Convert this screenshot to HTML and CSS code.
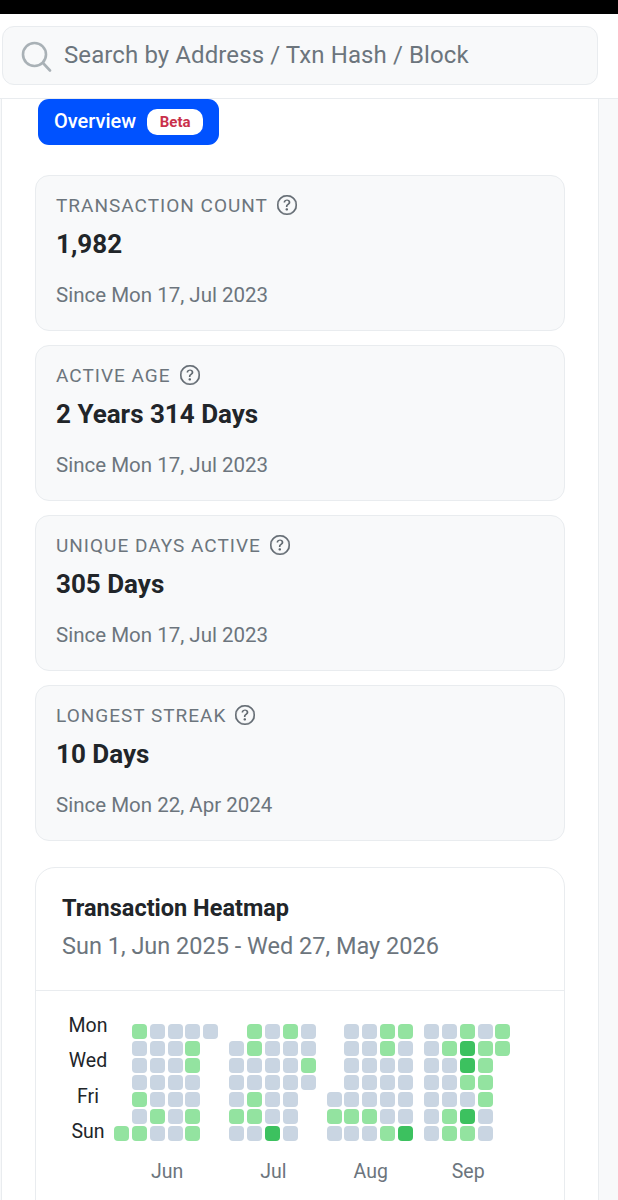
FILE: index.html
```html
<!DOCTYPE html>
<html lang="en">
<head>
    <meta charset="UTF-8">
    <meta name="viewport" content="width=device-width, initial-scale=1.0">
    <title>Address Overview</title>
    <link rel="stylesheet" href="styles.css">
</head>
<body>
    <svg class="defs" width="0" height="0">
        <symbol id="help" viewBox="0 0 16 16">
            <path d="M8 15A7 7 0 1 1 8 1a7 7 0 0 1 0 14zm0 1A8 8 0 1 0 8 0a8 8 0 0 0 0 16z" stroke="currentColor" stroke-width="0.4"/>
            <path d="M5.255 5.786a.237.237 0 0 0 .241.247h.825c.138 0 .248-.113.266-.25.09-.656.54-1.134 1.342-1.134.686 0 1.314.343 1.314 1.168 0 .635-.374.927-.965 1.371-.673.489-1.206 1.06-1.168 1.987l.003.217a.25.25 0 0 0 .25.246h.811a.25.25 0 0 0 .25-.25v-.105c0-.718.273-.927 1.01-1.486.609-.463 1.244-.977 1.244-2.056 0-1.511-1.276-2.241-2.673-2.241-1.267 0-2.655.59-2.75 2.286zm1.557 5.763c0 .533.425.927 1.01.927.609 0 1.028-.394 1.028-.927 0-.552-.42-.94-1.029-.94-.584 0-1.009.388-1.009.94z"/>
        </symbol>
    </svg>

    <div class="status-bar"></div>

    <header class="top">
        <div class="search">
            <svg class="search-icon" width="31" height="31" viewBox="0 0 31 31" fill="none" stroke="#a9b1b6" stroke-width="2.6" stroke-linecap="round">
                <circle cx="13.5" cy="13.5" r="11.5"/>
                <line x1="22" y1="22" x2="29" y2="29.5"/>
            </svg>
            <div class="search-text">Search by Address / Txn Hash / Block</div>
        </div>
    </header>

    <main class="sheet">
        <a class="tab"><span class="tab-name">Overview</span> <span class="beta">Beta</span></a>

        <section class="stat">
            <div class="stat-label">Transaction Count <svg class="help"><use href="#help"/></svg></div>
            <div class="stat-value">1,982</div>
            <div class="stat-since">Since Mon 17, Jul 2023</div>
        </section>
        <section class="stat">
            <div class="stat-label">Active Age <svg class="help"><use href="#help"/></svg></div>
            <div class="stat-value">2 Years 314 Days</div>
            <div class="stat-since">Since Mon 17, Jul 2023</div>
        </section>
        <section class="stat">
            <div class="stat-label">Unique Days Active <svg class="help"><use href="#help"/></svg></div>
            <div class="stat-value">305 Days</div>
            <div class="stat-since">Since Mon 17, Jul 2023</div>
        </section>
        <section class="stat">
            <div class="stat-label">Longest Streak <svg class="help"><use href="#help"/></svg></div>
            <div class="stat-value">10 Days</div>
            <div class="stat-since">Since Mon 22, Apr 2024</div>
        </section>

        <section class="heatmap">
            <div class="heatmap-head">
                <h2>Transaction Heatmap</h2>
                <p>Sun 1, Jun 2025 - Wed 27, May 2026</p>
            </div>
            <div class="heatmap-body">
                <div class="days">
                    <span>Mon</span>
                    <span>Wed</span>
                    <span>Fri</span>
                    <span>Sun</span>
                </div>
                <div class="months">
                    <div class="month">
                        <div class="weeks">
                            <div class="week">
                                <i class="none"></i><i class="none"></i><i class="none"></i><i class="none"></i><i class="none"></i><i class="none"></i><i class="low"></i>
                            </div>
                            <div class="week">
                                <i class="low"></i><i></i><i></i><i></i><i class="low"></i><i></i><i class="low"></i>
                            </div>
                            <div class="week">
                                <i></i><i></i><i></i><i></i><i></i><i class="low"></i><i></i>
                            </div>
                            <div class="week">
                                <i></i><i></i><i></i><i></i><i></i><i></i><i></i>
                            </div>
                            <div class="week">
                                <i></i><i class="low"></i><i class="low"></i><i></i><i></i><i class="low"></i><i class="low"></i>
                            </div>
                            <div class="week">
                                <i></i>
                            </div>
                        </div>
                        <div class="month-name">Jun</div>
                    </div>
                    <div class="month">
                        <div class="weeks">
                            <div class="week">
                                <i class="none"></i><i></i><i></i><i></i><i></i><i class="low"></i><i></i>
                            </div>
                            <div class="week">
                                <i class="low"></i><i class="low"></i><i></i><i></i><i class="low"></i><i class="low"></i><i></i>
                            </div>
                            <div class="week">
                                <i></i><i></i><i></i><i></i><i></i><i></i><i class="high"></i>
                            </div>
                            <div class="week">
                                <i class="low"></i><i></i><i></i><i></i><i></i><i></i><i></i>
                            </div>
                            <div class="week">
                                <i></i><i></i><i class="low"></i><i></i>
                            </div>
                        </div>
                        <div class="month-name">Jul</div>
                    </div>
                    <div class="month">
                        <div class="weeks">
                            <div class="week">
                                <i class="none"></i><i class="none"></i><i class="none"></i><i class="none"></i><i></i><i class="low"></i><i></i>
                            </div>
                            <div class="week">
                                <i></i><i></i><i></i><i></i><i></i><i class="low"></i><i></i>
                            </div>
                            <div class="week">
                                <i></i><i></i><i></i><i></i><i></i><i class="low"></i><i></i>
                            </div>
                            <div class="week">
                                <i class="low"></i><i class="low"></i><i></i><i></i><i></i><i></i><i class="low"></i>
                            </div>
                            <div class="week">
                                <i class="low"></i><i></i><i></i><i></i><i></i><i></i><i class="high"></i>
                            </div>
                        </div>
                        <div class="month-name">Aug</div>
                    </div>
                    <div class="month">
                        <div class="weeks">
                            <div class="week">
                                <i></i><i></i><i></i><i></i><i></i><i></i><i></i>
                            </div>
                            <div class="week">
                                <i></i><i class="low"></i><i></i><i></i><i></i><i class="low"></i><i class="low"></i>
                            </div>
                            <div class="week">
                                <i class="low"></i><i class="high"></i><i class="high"></i><i class="low"></i><i></i><i class="high"></i><i class="low"></i>
                            </div>
                            <div class="week">
                                <i></i><i class="low"></i><i class="low"></i><i class="low"></i><i class="low"></i><i></i><i></i>
                            </div>
                            <div class="week">
                                <i class="low"></i><i class="low"></i>
                            </div>
                        </div>
                        <div class="month-name">Sep</div>
                    </div>
                </div>
            </div>
        </section>
    </main>
</body>
</html>
```

FILE: styles.css
```css
html, body {
    margin: 0;
    height: 1200px;
    overflow: hidden;
}
body {
    font-family: Roboto, "Liberation Sans", sans-serif;
    color: #212529;
    background-color: #f8f9fa;
}
.defs {
    position: absolute;
}
.status-bar {
    height: 14px;
    background-color: #000;
}
.top {
    height: 85px;
    padding: 12px 20px 0 2px;
    box-sizing: border-box;
    background-color: #fff;
    border-bottom: 1px solid #e9ecef;
}
.search {
    display: flex;
    align-items: center;
    height: 59px;
    box-sizing: border-box;
    padding-left: 18px;
    background-color: #f8f9fa;
    border: 1px solid #e9ecef;
    border-radius: 12px;
}
.search-icon {
    flex: none;
    margin-top: 2px;
}
.search-text {
    width: 406px;
    margin: -2px 0 0 12px;
    white-space: nowrap;
    font-size: 24px;
    letter-spacing: 0.1px;
    color: #6c757d;
}
.sheet {
    width: 598px;
    height: 1101px;
    margin-left: 1px;
    padding: 0 33px 0 33px;
    box-sizing: border-box;
    background-color: #fff;
    border-left: 1px solid #e9ecef;
    border-right: 1px solid #e9ecef;
}
.tab {
    display: flex;
    align-items: center;
    gap: 11px;
    width: 181px;
    height: 46px;
    margin: 0 0 30px 3px;
    padding-left: 16px;
    box-sizing: border-box;
    background-color: #0052ff;
    border-radius: 11px;
    color: #fff;
    font-size: 20px;
    font-weight: 500;
}
.tab-name {
    margin-top: -2px;
}
.beta {
    width: 56px;
    height: 26px;
    line-height: 26px;
    text-align: center;
    background-color: #fff;
    border-radius: 10px;
    color: #c9304b;
    font-size: 15px;
    font-weight: 700;
}
.stat {
    height: 156px;
    margin-bottom: 14px;
    padding-left: 20px;
    box-sizing: border-box;
    background-color: #f8f9fa;
    border: 1px solid #e9ecef;
    border-radius: 14px;
}
.stat-label {
    display: flex;
    align-items: center;
    gap: 9px;
    height: 22px;
    margin-top: 18px;
    font-size: 19px;
    letter-spacing: 1px;
    text-transform: uppercase;
    color: #6c757d;
}
.help {
    width: 20px;
    height: 20px;
    color: #5f676e;
    fill: #5f676e;
}
.stat-value {
    margin-top: 13px;
    font-size: 26px;
    font-weight: 700;
    line-height: 30px;
}
.stat-since {
    margin-top: 22px;
    font-size: 20.5px;
    line-height: 28px;
    color: #6c757d;
}
.heatmap {
    height: 400px;
    margin-top: 26px;
    background-color: #fff;
    border: 1px solid #e9ecef;
    border-radius: 20px;
}
.heatmap-head {
    height: 123px;
    padding: 25px 26px 0;
    box-sizing: border-box;
    border-bottom: 1px solid #e9ecef;
}
.heatmap-head h2 {
    margin: 0;
    font-size: 23.5px;
    font-weight: 700;
    line-height: 30px;
}
.heatmap-head p {
    margin: 8px 0 0;
    font-size: 23.5px;
    line-height: 30px;
    color: #6c757d;
}
.heatmap-body {
    display: flex;
    padding: 16px 0 0 26px;
}
.days {
    display: flex;
    flex-direction: column;
    width: 52px;
    margin: 1px 0 0 0;
}
.days span {
    height: 35.4px;
    line-height: 35.4px;
    text-align: center;
    font-size: 19.5px;
}
.months {
    display: flex;
    gap: 11px;
    padding-top: 17px;
}
.month-name {
    margin-top: 18px;
    padding-left: 2px;
    line-height: 26px;
    text-align: center;
    font-size: 19.5px;
    color: #6c757d;
}
.weeks {
    display: flex;
    gap: 2.85px;
    height: 116.5px;
}
.week {
    display: flex;
    flex-direction: column;
    gap: 2.5px;
}
.week i {
    display: block;
    width: 15px;
    height: 14.5px;
    background-color: #c9d5e2;
    border-radius: 4px;
}
.week i.low {
    background-color: #93e3a0;
}
.week i.high {
    background-color: #3cc15f;
}
.week i.none {
    background-color: transparent;
}
```
